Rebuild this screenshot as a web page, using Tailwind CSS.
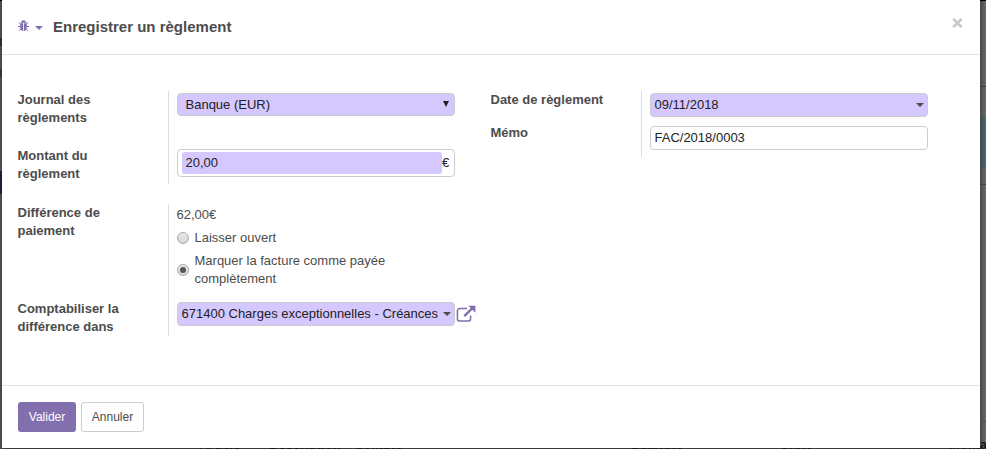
<!DOCTYPE html>
<html lang="fr">
<head>
<meta charset="utf-8">
<title>Enregistrer un règlement</title>
<script src="https://cdn.jsdelivr.net/npm/@tailwindcss/browser@4"></script>
</head>
<body class="relative h-[449px] w-[986px] overflow-hidden bg-[#3a3a3c] font-['Liberation_Sans',Arial,sans-serif] text-[13px] leading-[18px] text-[#4c4c4c]">
  <!-- dimmed page behind the dialog -->
  <div class="absolute inset-y-0 left-0 flex w-[2px] flex-col bg-[#4b4b4c]">
    <div class="h-px bg-black"></div>
    <div class="mt-[37px] h-2 bg-[#2b2b2b]"></div>
    <div class="mt-[23px] h-2 bg-[#333]"></div>
    <div class="mt-[94px] h-[23px] bg-[#211c38]"></div>
  </div>
  <div class="absolute inset-y-0 right-0 flex w-[6px] flex-col bg-linear-to-r from-[#484949] to-[#6a6b6b]">
    <div class="h-px bg-black"></div>
    <div class="mt-[85px] h-px bg-[#3d3d3d]"></div>
    <div class="mt-[30px] h-[51px] bg-linear-to-r from-[#3c4b50] to-[#536870]"></div>
    <div class="mt-4 h-px bg-[#424242]"></div>
    <div class="mt-[236px] h-px bg-[#4c4c4c]"></div>
  </div>
  <div class="absolute top-[436px] left-[200px] flex text-[13px] font-bold text-[#161616]">
    <span class="w-[69px]">Article</span><span class="w-[85px]">Description</span><span class="w-[276px]">Compte</span><span class="w-[150px]">Quantité</span><span class="w-[169px]">Unité</span><span>Monta</span>
  </div>

  <div class="relative ml-[2px] flex h-[448px] w-[978px] flex-col bg-white">
    <header class="flex h-[55px] shrink-0 items-center border-b border-[#e5e5e5] pl-4">
      <svg class="mt-[-2px] h-3 w-[11px]" viewBox="0 0 11 12" fill="none" stroke="#806eae">
        <path d="M3 2.7C3 .9 4 .2 5.5 .2S8 .9 8 2.7Z" fill="#806eae" stroke="none"/>
        <path d="M2.2 3.3H5.1V11C3.3 10.8 2.2 9.4 2.2 7ZM5.9 3.3H8.8V7C8.8 9.4 7.7 10.8 5.9 11Z" fill="#806eae" stroke="none"/>
        <path d="M.9 2.3 2.8 4.2M10.1 2.3 8.2 4.2M0 6.5H2.6M8.4 6.5H11M1.2 10.8 3.1 8.8M9.8 10.8 7.9 8.8"/>
      </svg>
      <svg class="ml-[6px] mt-px h-1 w-2" viewBox="0 0 8 4"><path d="M0 0H8L4 4Z" fill="#806eae"/></svg>
      <h4 class="ml-[10px] text-[15px] font-bold leading-[22px]">Enregistrer un règlement</h4>
      <svg class="mt-[-8px] mr-[17px] ml-auto h-[10px] w-[11px]" viewBox="0 0 11 10"><path d="M1.2 .8 9.6 9.2M9.6 .8 1.2 9.2" stroke="#c8c8c8" stroke-width="2.6"/></svg>
    </header>

    <main class="flex h-[331px] shrink-0 flex-col border-b border-[#e5e5e5] pt-9 pl-[15.5px]">
      <div class="flex items-start">
        <section class="flex h-[93px] w-[473px]">
          <div class="w-[151px] border-r border-[#ddd] font-bold">
            <div>Journal des<br>règlements</div>
            <div class="mt-5">Montant du<br>règlement</div>
          </div>
          <div class="ml-2 w-[278px] pt-[2px] text-[#222]">
            <div class="flex h-[23px] items-center justify-between rounded-[4px] border border-[#ccc] bg-[#d5c8ff] pr-[5px] pl-2">
              <span>Banque (EUR)</span>
              <svg class="mb-[2px] h-[6px] w-[6px]" viewBox="0 0 6 6"><path d="M0 0H6L3 6Z" fill="#222"/></svg>
            </div>
            <div class="mt-[33px] flex h-7 items-center rounded-[4px] border border-[#ccc] pl-1">
              <span class="h-[22px] w-[260px] shrink-0 rounded-[3px] bg-[#d5c8ff] pl-1 leading-[22px]">20,00</span><span class="ml-[.5px]">€</span>
            </div>
          </div>
        </section>
        <section class="flex h-[66px]">
          <div class="w-[151px] border-r border-[#ddd] font-bold">
            <div>Date de règlement</div>
            <div class="mt-[15px]">Mémo</div>
          </div>
          <div class="ml-2 w-[278px] pt-[2px] text-[#222]">
            <div class="flex h-6 items-center justify-between rounded-[4px] border border-[#ccc] bg-[#d5c8ff] pr-[3px] pl-1">
              <span>09/11/2018</span>
              <svg class="h-1 w-2" viewBox="0 0 8 4"><path d="M0 0H8L4 4Z" fill="#4c4c4c"/></svg>
            </div>
            <div class="mt-[9px] flex h-6 items-center rounded-[4px] border border-[#ccc] pl-1">FAC/2018/0003</div>
          </div>
        </section>
      </div>

      <section class="mt-5 flex h-[132px]">
        <div class="w-[151px] border-r border-[#ddd] font-bold">
          <div>Différence de<br>paiement</div>
          <div class="mt-[60px]">Comptabiliser la<br>différence dans</div>
        </div>
        <div class="ml-2 pt-[2px]">
          <div>62,00€</div>
          <div class="mt-[5px] flex items-center gap-[6px]">
            <span class="h-3 w-3 rounded-full border border-[#a9a9a9] bg-linear-to-b from-[#e8e8e8] to-[#d8d8d8]"></span>
            <span>Laisser ouvert</span>
          </div>
          <div class="mt-[5px] flex items-center gap-[6px]">
            <span class="flex h-3 w-3 items-center justify-center rounded-full border border-[#a9a9a9] bg-linear-to-b from-[#e8e8e8] to-[#d8d8d8]"><span class="h-[6px] w-[6px] rounded-full bg-[#555]"></span></span>
            <span>Marquer la facture comme payée<br>complètement</span>
          </div>
          <div class="mt-[14px] flex items-center">
            <div class="flex h-6 w-[278px] items-center justify-between rounded-[4px] border border-[#ccc] bg-[#d5c8ff] pr-[3px] pl-1 text-[#222]">
              <span class="w-[257px] overflow-hidden whitespace-nowrap">671400 Charges exceptionnelles - Créances</span>
              <svg class="h-1 w-2" viewBox="0 0 8 4"><path d="M0 0H8L4 4Z" fill="#4c4c4c"/></svg>
            </div>
            <svg class="ml-px h-[18px] w-5" viewBox="0 0 20 18" fill="none" stroke="#806eae">
              <path d="M11 3.5H3.8C2.4 3.5 1.4 4.5 1.4 5.9V13.7C1.4 15.1 2.4 16.1 3.8 16.1H12.2C13.6 16.1 14.6 15.1 14.6 13.7V10.5" stroke-width="1.5"/>
              <path d="M8.3 11.2 16.5 3" stroke-width="2.4"/>
              <path d="M12.4 .8H19.4V7.8Z" fill="#806eae" stroke="none"/>
            </svg>
          </div>
        </div>
      </section>
    </main>

    <footer class="flex gap-[5px] pt-4 pl-4 text-[12px]">
      <button class="h-[30px] w-[58px] rounded-[3px] bg-[#826fae] text-white">Valider</button>
      <button class="h-[30px] w-[63px] rounded-[3px] border border-[#ccc] bg-white">Annuler</button>
    </footer>
  </div>
</body>
</html>
